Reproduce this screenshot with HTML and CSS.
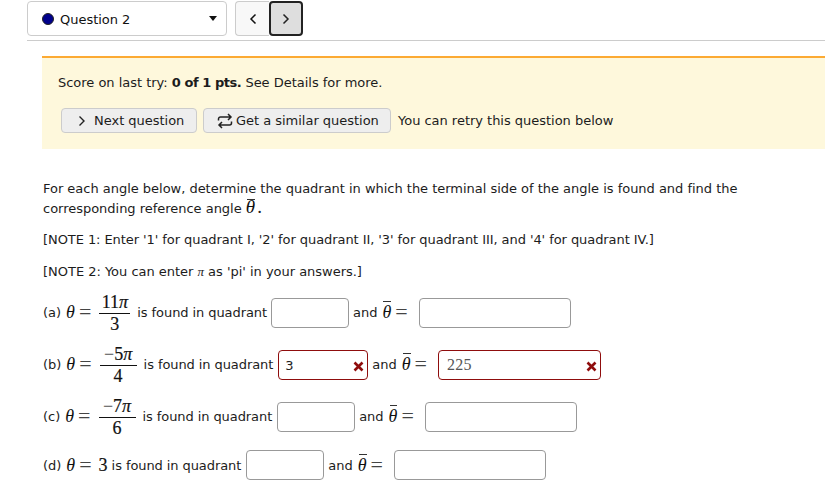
FILE: index.html
```html
<!DOCTYPE html>
<html lang="en">
<head>
<meta charset="utf-8">
<title>Question 2</title>
<link rel="stylesheet" href="styles.css">
</head>
<body>
<header class="topbar">
  <div class="select">
    <span class="dot"></span>
    <span class="select-label">Question 2</span>
    <span class="caret"></span>
  </div>
  <div class="pager">
    <button class="page-btn prev" type="button" aria-label="Previous"><svg width="8" height="12" viewBox="0 0 8 12"><path d="M6.500 1.500 2 6l4.500 4.500" fill="none" stroke="#111" stroke-width="1.500"/></svg></button>
    <button class="page-btn next" type="button" aria-label="Next"><svg width="8" height="12" viewBox="0 0 8 12"><path d="M1.500 1.500 6 6l-4.500 4.500" fill="none" stroke="#222" stroke-width="1.500"/></svg></button>
  </div>
</header>
<main class="content">
  <section class="alert">
    <p class="score">Score on last try: <b>0 of 1 pts.</b> See Details for more.</p>
    <div class="actions">
      <button class="btn btn-next" type="button"><svg width="8" height="12" viewBox="0 0 8 12"><path d="M1.500 1.500 6 6l-4.500 4.500" fill="none" stroke="#222" stroke-width="1.400"/></svg>Next question</button>
      <button class="btn btn-similar" type="button"><svg width="16" height="16" viewBox="0 0 16 16"><path d="M1.500 7.500V6a2 2 0 0 1 2-2H14M11 1l3 3-3 3M14.500 8.500V10a2 2 0 0 1-2 2H2M5 9l-3 3 3 3" fill="none" stroke="#222" stroke-width="1.500"/></svg>Get a similar question</button>
      <span class="retry">You can retry this question below</span>
    </div>
  </section>
  <section class="question">
    <p class="intro">For each angle below, determine the quadrant in which the terminal side of the angle is found and find the corresponding reference angle <span class="math big"><span class="bar">θ</span><span class="dotmark">.</span></span></p>
    <p class="note first">[NOTE 1: Enter '1' for quadrant I, '2' for quadrant II, '3' for quadrant III, and '4' for quadrant IV.]</p>
    <p class="note">[NOTE 2: You can enter <span class="math"><i>π</i></span> as 'pi' in your answers.]</p>

    <div class="row tall top">
      <span>(a)</span><span class="math eq"><i>θ</i><span class="op">=</span></span>
      <span class="frac frac-a"><span class="num">11<i>π</i></span><span class="den">3</span></span>
      <span class="found">is found in quadrant</span>
      <span class="field short"></span>
      <span>and</span><span class="math eq"><span class="bar">θ</span><span class="op">=</span></span>
      <span class="field long"></span>
    </div>

    <div class="row tall">
      <span>(b)</span><span class="math eq"><i>θ</i><span class="op">=</span></span>
      <span class="frac frac-b"><span class="num"><span class="minus">−</span>5<i>π</i></span><span class="den">4</span></span>
      <span class="found">is found in quadrant</span>
      <span class="field short wrong">3<svg class="cross" width="11" height="11" viewBox="0 0 11 11"><path d="M1.500 1.500l8 8M9.500 1.500l-8 8" stroke="#8f0d0d" stroke-width="2.600" fill="none"/></svg></span>
      <span>and</span><span class="math eq"><span class="bar">θ</span><span class="op">=</span></span>
      <span class="field long wrong serif">225<svg class="cross" width="11" height="11" viewBox="0 0 11 11"><path d="M1.500 1.500l8 8M9.500 1.500l-8 8" stroke="#8f0d0d" stroke-width="2.600" fill="none"/></svg></span>
    </div>

    <div class="row tall">
      <span>(c)</span><span class="math eq"><i>θ</i><span class="op">=</span></span>
      <span class="frac frac-c"><span class="num"><span class="minus">−</span>7<i>π</i></span><span class="den">6</span></span>
      <span class="found">is found in quadrant</span>
      <span class="field short"></span>
      <span>and</span><span class="math eq"><span class="bar">θ</span><span class="op">=</span></span>
      <span class="field long"></span>
    </div>

    <div class="row last">
      <span>(d)</span><span class="math eq"><i>θ</i><span class="op">=</span><span class="three">3</span></span>
      <span class="found-d">is found in quadrant</span>
      <span class="field short"></span>
      <span>and</span><span class="math eq"><span class="bar">θ</span><span class="op">=</span></span>
      <span class="field long"></span>
    </div>
  </section>
</main>
</body>
</html>
```
FILE: styles.css
```css
* { box-sizing: border-box; }
html, body { margin: 0; padding: 0; }
body {
  width: 825px;
  height: 498px;
  overflow: hidden;
  background: #fff;
  color: #1c1c1c;
  font-family: "DejaVu Sans", sans-serif;
  font-size: 13px;
  letter-spacing: -0.02px;
}
p { margin: 0; }
b { letter-spacing: -0.45px; }
.topbar {
  margin-left: 27px;
  padding-top: 1px;
  height: 41px;
  display: flex;
  gap: 8px;
  align-items: flex-start;
  border-bottom: 1px solid #ccc;
}
.select {
  width: 200px;
  height: 35px;
  border: 1px solid #ccc;
  border-radius: 4px;
  display: flex;
  align-items: center;
  padding: 0 9px 0 14px;
}
.dot {
  width: 12px;
  height: 12px;
  border-radius: 50%;
  background: #00008b;
  border: 1px solid #222;
  margin-right: 6px;
}
.select-label { flex: 1; color: #111; padding-top: 1px; }
.caret {
  width: 0;
  height: 0;
  border-left: 4px solid transparent;
  border-right: 4px solid transparent;
  border-top: 5px solid #111;
}
.pager { display: flex; }
.page-btn {
  width: 34px;
  height: 35px;
  padding: 0;
  display: flex;
  align-items: center;
  justify-content: center;
  border: 1px solid #ccc;
}
.prev { background: #f8f8f8; border-radius: 4px 0 0 4px; border-right: 0; }
.next { background: #dedede; border: 2px solid #222; border-radius: 4px; }
.content { margin-left: 42px; padding-top: 15px; }
.alert {
  height: 93px;
  background: #fef8dc;
  border-top: 2px solid #fcaa33;
  padding: 17px 16px 0;
}
.score { line-height: 16px; }
.actions {
  margin-top: 17px;
  margin-left: 3px;
  display: flex;
  align-items: center;
}
.btn {
  height: 25px;
  padding: 0;
  display: flex;
  align-items: center;
  font: inherit;
  letter-spacing: inherit;
  color: #1c1c1c;
  background: #eee;
  border: 1px solid #ccc;
  border-radius: 4px;
}
.btn-next { width: 136px; padding-left: 16px; gap: 8px; margin-right: 6px; }
.btn-similar { width: 188px; padding-left: 13px; gap: 3px; margin-right: 7px; }
.question { padding: 30px 0 0 1px; }
.intro { width: 710px; line-height: 20px; }
.note { margin-top: 13px; line-height: 19px; }
.note.first { margin-top: 11px; letter-spacing: -0.07px; }
.math { font-family: "Liberation Serif", serif; letter-spacing: 0; }
.math.big { font-size: 19px; line-height: 0; }
.dotmark { margin-left: 2px; }
.eq { font-size: 18px; margin-left: 5px; white-space: nowrap; display: inline-flex; align-items: center; }
.eq i, .bar { color: #111; }
.op { font-size: 22px; line-height: 18px; color: #444; margin: 0 8px 0 4px; }
.bar {
  position: relative;
  font-style: italic;
  display: inline-block;
}
.bar::before {
  content: "";
  position: absolute;
  left: 1px;
  right: 0;
  top: -1px;
  height: 1px;
  background: #333;
}
.big .bar::before { top: -8px; }
.row {
  display: flex;
  align-items: center;
  height: 30px;
  margin-top: 16px;
}
.row.top { margin-top: 14px; }
.row.last { margin-top: 15px; }
.tall { height: 36px; }
.tall > span:not(.frac):not(.field) { padding-bottom: 2px; }
.frac {
  display: inline-flex;
  flex-direction: column;
  align-items: center;
  font-family: "Liberation Serif", serif;
  font-size: 18px;
  line-height: 17px;
  letter-spacing: 0;
  color: #111;
  -webkit-text-stroke: 0.2px #111;
}
.num { padding-bottom: 2px; white-space: nowrap; }
.den { border-top: 1px solid #111; width: 100%; text-align: center; padding-top: 2px; }
.frac-a { width: 31px; }
.frac-b { width: 37px; }
.frac-c { width: 37px; }
.minus { color: #555; -webkit-text-stroke: 0; }
.three { color: #111; -webkit-text-stroke: 0.2px #111; margin-left: -1px; }
.found { margin-left: 7px; margin-right: 4px; letter-spacing: -0.08px; }
.frac-b + .found, .frac-c + .found { margin-right: 5px; }
.found-d { margin-left: 4px; margin-right: 5px; letter-spacing: -0.08px; }
.field {
  position: relative;
  display: flex;
  align-items: center;
  height: 30px;
  border: 1px solid #999;
  border-radius: 4px;
  margin-right: 4px;
  background: #fff;
  color: #222;
  padding-left: 6px;
}
.short { width: 78px; }
.long { width: 152px; margin-left: 3px; margin-right: 0; }
.wrong { border-color: #8f0d0d; width: 90px; }
.wrong.long { width: 163px; }
.serif { font-family: "Liberation Serif", serif; font-size: 16px; color: #555; letter-spacing: 0.3px; padding-left: 8px; }
.cross { position: absolute; right: 3px; top: 10px; }
```
